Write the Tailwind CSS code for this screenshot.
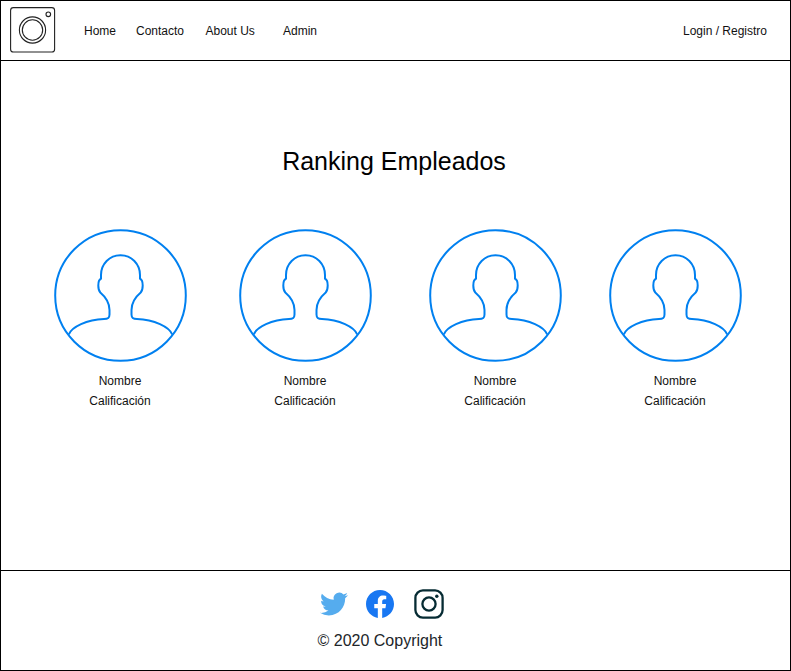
<!DOCTYPE html>
<html lang="es">
<head>
<meta charset="utf-8">
<title>Ranking Empleados</title>
<script src="https://cdn.jsdelivr.net/npm/@tailwindcss/browser@4"></script>
</head>
<body class="bg-white font-['Liberation_Sans',Arial,sans-serif] text-xs leading-[14px] text-black">
<svg class="hidden">
  <symbol id="avatar" viewBox="0 0 133 133">
    <g fill="none" stroke="#0080f0" stroke-width="2" stroke-linejoin="round">
      <circle cx="66.5" cy="66.5" r="65.3"/>
      <path d="M14.8 105.5C17.5 98 33 90.5 50 90C54 90 55.5 89.200 55.500 85.500V81C55.500 73.500 51 67.500 46.300 63.500C44.500 61.500 44.300 60 44.300 56.500C44.300 52.500 45 50.500 47 49.800V46C47 35 55.500 26.200 66.500 26.200S86 35 86 46V49.800C88 50.500 88.700 52.500 88.700 56.500C88.700 60 88.500 61.500 86.700 63.500C82 67.500 77.500 73.500 77.500 81V85.500C77.500 89.200 79 90 83 90C100 90.500 115.500 98 118.200 105.500"/>
    </g>
  </symbol>
</svg>
<div class="flex h-[671px] w-[791px] flex-col border border-black">
  <header class="flex h-[60px] shrink-0 items-center border-b border-black pr-[23px] pl-[9px]">
    <svg class="mb-[2px] h-[46px] w-[46px]" viewBox="0 0 46 46" fill="none" stroke="#222" stroke-width="1.1">
      <rect x="0.600" y="0.600" width="44" height="44.400" rx="2.800"/>
      <circle cx="22.500" cy="23" r="13.100"/>
      <circle cx="22.500" cy="23" r="10.200"/>
      <circle cx="38.300" cy="7.300" r="2.300"/>
    </svg>
    <nav class="ml-7 flex text-[#111]">
      <a class="w-[52px]">Home</a>
      <a class="w-[69.500px]">Contacto</a>
      <a class="w-[77.500px]">About Us</a>
      <a>Admin</a>
    </nav>
    <a class="ml-auto text-[#111]">Login / Registro</a>
  </header>
  <main class="flex grow flex-col">
    <h1 class="mt-[85px] pr-[3px] text-center text-[25px] leading-[30px]">Ranking Empleados</h1>
    <section class="mt-[53px] flex pl-[53px] text-center text-[#111]">
      <article class="mr-[52px] w-[133px]"><svg class="block h-[133px] w-[133px]"><use href="#avatar"/></svg><p class="mt-3 pr-px">Nombre</p><p class="mt-1.5 pr-px">Calificación</p></article>
      <article class="mr-[57px] w-[133px]"><svg class="block h-[133px] w-[133px]"><use href="#avatar"/></svg><p class="mt-3 pr-px">Nombre</p><p class="mt-1.5 pr-px">Calificación</p></article>
      <article class="mr-[47px] w-[133px]"><svg class="block h-[133px] w-[133px]"><use href="#avatar"/></svg><p class="mt-3 pr-px">Nombre</p><p class="mt-1.5 pr-px">Calificación</p></article>
      <article class="w-[133px]"><svg class="block h-[133px] w-[133px]"><use href="#avatar"/></svg><p class="mt-3 pr-px">Nombre</p><p class="mt-1.5 pr-px">Calificación</p></article>
    </section>
  </main>
  <footer class="h-[100px] shrink-0 border-t border-black pt-[17px]">
    <div class="flex h-8 items-center pl-[319px]">
      <svg class="h-[28px] w-[28px]" viewBox="0 0 24 24" fill="#55acee"><path d="M23.953 4.570a10 10 0 01-2.825.775 4.958 4.958 0 002.163-2.723c-.951.555-2.005.959-3.127 1.184a4.920 4.920 0 00-8.384 4.482C7.690 8.095 4.067 6.130 1.640 3.162a4.822 4.822 0 00-.666 2.475c0 1.710.870 3.213 2.188 4.096a4.904 4.904 0 01-2.228-.616v.060a4.923 4.923 0 003.946 4.827 4.996 4.996 0 01-2.212.085 4.936 4.936 0 004.604 3.417 9.867 9.867 0 01-6.102 2.105c-.390 0-.779-.023-1.170-.067a13.995 13.995 0 007.557 2.209c9.053 0 13.998-7.496 13.998-13.985 0-.210 0-.420-.015-.630A9.935 9.935 0 0024 4.590z"/></svg>
      <svg class="ml-[18px] h-[28px] w-[28px]" viewBox="0 0 24 24" fill="#1877f2"><path d="M24 12.073c0-6.627-5.373-12-12-12s-12 5.373-12 12c0 5.990 4.388 10.954 10.125 11.854v-8.385H7.078v-3.470h3.047V9.430c0-3.007 1.792-4.669 4.533-4.669 1.312 0 2.686.235 2.686.235v2.953H15.830c-1.491 0-1.956.925-1.956 1.874v2.250h3.328l-.532 3.470h-2.796v8.385C19.612 23.027 24 18.062 24 12.073z"/></svg>
      <svg class="ml-5 h-[30px] w-[30px]" viewBox="0 0 30 30" fill="none" stroke="#062b33" stroke-width="2.300"><rect x="1.400" y="1.400" width="27.200" height="27.200" rx="7.500"/><circle cx="15" cy="15" r="6.600"/><circle cx="22.800" cy="7.200" r="1.700" fill="#062b33" stroke="none"/></svg>
    </div>
    <p class="mt-[12px] pl-[316.500px] text-base leading-[18px] text-[#212529]">© 2020 Copyright</p>
  </footer>
</div>
</body>
</html>
